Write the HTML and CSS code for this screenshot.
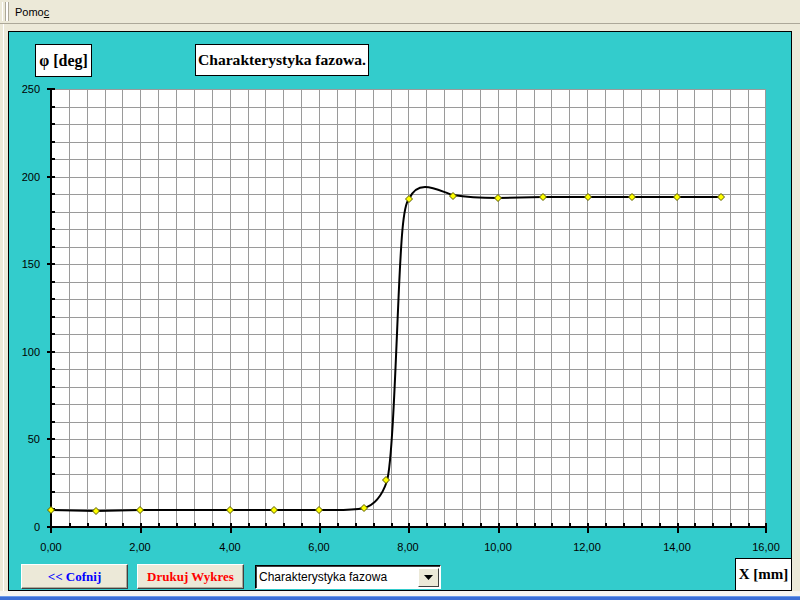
FILE: index.html
```html
<!DOCTYPE html>
<html lang="pl">
<head>
<meta charset="utf-8">
<title>Charakterystyka fazowa</title>
<link rel="stylesheet" href="styles.css">
</head>
<body>
<div class="menubar">
  <span class="grip"></span>
  <span class="menu-item">Pomo<u>c</u></span>
</div>
<div class="frame">
  <div class="panel">
    <div class="header">
      <div class="label-box unit-box">φ [deg]</div>
      <div class="label-box title-box">Charakterystyka fazowa.</div>
    </div>
    <svg class="chart" width="782" height="478" viewBox="0 0 782 478" xmlns="http://www.w3.org/2000/svg">
      <defs>
        <path id="mk" d="M0 -3.5L3.5 0L0 3.5L-3.5 0Z" fill="#ffff00" stroke="#5a5a00" stroke-width="1"/>
      </defs>
      <g transform="translate(-9,-80)">
        <rect x="51" y="89" width="715" height="438" fill="#ffffff"/>
        <path class="grid" d="M69.5 89v438M87.5 89v438M105.5 89v438M122.5 89v438M140.5 89v438M158.5 89v438M176.5 89v438M194.5 89v438M212.5 89v438M230.5 89v438M248.5 89v438M265.5 89v438M283.5 89v438M301.5 89v438M319.5 89v438M337.5 89v438M355.5 89v438M373.5 89v438M391.5 89v438M408.5 89v438M426.5 89v438M444.5 89v438M462.5 89v438M480.5 89v438M498.5 89v438M516.5 89v438M534.5 89v438M551.5 89v438M569.5 89v438M587.5 89v438M605.5 89v438M623.5 89v438M641.5 89v438M659.5 89v438M677.5 89v438M694.5 89v438M712.5 89v438M730.5 89v438M748.5 89v438M765.5 89v438M51 89.5h715M51 107.5h715M51 124.5h715M51 142.5h715M51 159.5h715M51 177.5h715M51 194.5h715M51 212.5h715M51 229.5h715M51 247.5h715M51 264.5h715M51 282.5h715M51 299.5h715M51 317.5h715M51 334.5h715M51 352.5h715M51 369.5h715M51 387.5h715M51 404.5h715M51 422.5h715M51 439.5h715M51 457.5h715M51 474.5h715M51 492.5h715M51 509.5h715"/>
        <path class="tick" d="M52 107h3M52 124h3M52 142h3M52 159h3M52 194h3M52 212h3M52 229h3M52 247h3M52 282h3M52 299h3M52 317h3M52 334h3M52 369h3M52 387h3M52 404h3M52 422h3M52 457h3M52 474h3M52 492h3M52 509h3M47 89h8M47 177h8M47 264h8M47 352h8M47 439h8M47 527h8"/>
        <path class="tick" d="M70 523v3M88 523v3M106 523v3M123 523v3M159 523v3M177 523v3M195 523v3M213 523v3M249 523v3M266 523v3M284 523v3M302 523v3M338 523v3M356 523v3M374 523v3M392 523v3M427 523v3M445 523v3M463 523v3M481 523v3M517 523v3M535 523v3M552 523v3M570 523v3M606 523v3M624 523v3M642 523v3M660 523v3M695 523v3M713 523v3M731 523v3M749 523v3M141 523v10M231 523v10M320 523v10M409 523v10M499 523v10M588 523v10M678 523v10M766 523v10"/>
        <path class="axis" d="M51 89V533M50 527H767"/>
        <path class="curve" d="M51 510L96 511L140 510L230 510L274 510L319 510C335 510 350 511 364 508C375 505 382 496 387 481C392 462 395 380 398 310C401 240 403 205 409 199C413 190 418 187 425 187C435 187 445 193 453 195C465 197 480 198 498 198L543 197L721 197"/>
        <use href="#mk" x="51" y="510"/>
        <use href="#mk" x="96" y="511"/>
        <use href="#mk" x="140" y="510"/>
        <use href="#mk" x="230" y="510"/>
        <use href="#mk" x="274" y="510"/>
        <use href="#mk" x="319" y="510"/>
        <use href="#mk" x="364" y="508"/>
        <use href="#mk" x="386" y="480"/>
        <use href="#mk" x="409" y="199"/>
        <use href="#mk" x="453" y="196"/>
        <use href="#mk" x="498" y="198"/>
        <use href="#mk" x="543" y="197"/>
        <use href="#mk" x="588" y="197"/>
        <use href="#mk" x="632" y="197"/>
        <use href="#mk" x="677" y="197"/>
        <use href="#mk" x="721" y="197"/>
        <g class="ylabels">
          <text x="40" y="93">250</text>
          <text x="40" y="181">200</text>
          <text x="40" y="268">150</text>
          <text x="40" y="356">100</text>
          <text x="40" y="443">50</text>
          <text x="40" y="531">0</text>
        </g>
        <g class="xlabels">
          <text x="51" y="551">0,00</text>
          <text x="140" y="551">2,00</text>
          <text x="230" y="551">4,00</text>
          <text x="319" y="551">6,00</text>
          <text x="408" y="551">8,00</text>
          <text x="498" y="551">10,00</text>
          <text x="587" y="551">12,00</text>
          <text x="677" y="551">14,00</text>
          <text x="766" y="551">16,00</text>
        </g>
      </g>
    </svg>
    <div class="footer">
      <button class="btn btn-back">&lt;&lt; Cofnij</button>
      <button class="btn btn-print">Drukuj Wykres</button>
      <div class="combo">
        <span class="combo-text">Charakterystyka fazowa</span>
        <span class="combo-arrow"><svg width="9" height="5" viewBox="0 0 9 5"><path d="M0 0H9L4.5 5Z" fill="#000"/></svg></span>
      </div>
      <div class="label-box xunit-box">X [mm]</div>
    </div>
  </div>
</div>
<div class="bottom-gap"></div>
<div class="taskbar"></div>
</body>
</html>
```
FILE: styles.css
```css
html, body {
  margin: 0;
  padding: 0;
}
body {
  width: 800px;
  height: 600px;
  overflow: hidden;
  background: #ECE9D8;
  font-family: "Liberation Sans", Arial, sans-serif;
  font-size: 11px;
  color: #000;
}
.menubar {
  height: 24px;
  box-sizing: border-box;
  border-bottom: 1px solid #ACA899;
  display: flex;
  align-items: center;
}
.grip {
  margin-left: 2px;
  width: 2px;
  height: 19px;
  border-left: 1px solid #ffffff;
  border-right: 1px solid #ACA899;
  box-shadow: 2px 0 0 #ffffff, 3px 0 0 #ACA899;
}
.menu-item {
  margin-left: 9px;
  font-size: 11px;
}
.menu-item u {
  text-decoration: underline;
}
.frame {
  margin-left: 3px;
  border-left: 1px solid #ffffff;
  padding: 7px 0 0 4px;
  height: 560px;
}
.panel {
  width: 784px;
  height: 560px;
  box-sizing: border-box;
  border: 1px solid #000;
  background: #33CCCC;
  display: flex;
  flex-direction: column;
}
.header {
  height: 48px;
  box-sizing: border-box;
  padding: 12px 0 0 26px;
  display: flex;
  align-items: flex-start;
}
.label-box {
  background: #fff;
  border: 1px solid #000;
  box-sizing: border-box;
  font-family: "Liberation Serif", "Times New Roman", serif;
  font-weight: bold;
  display: flex;
  align-items: center;
  justify-content: center;
}
.unit-box {
  width: 57px;
  height: 33px;
  font-size: 16px;
}
.title-box {
  margin-left: 103px;
  width: 174px;
  height: 32px;
  font-size: 15.6px;
}
.chart {
  display: block;
  flex: none;
}
.grid {
  fill: none;
  stroke: #9a9a9a;
  stroke-width: 1;
}
.tick {
  fill: none;
  stroke: #000;
  stroke-width: 2;
}
.axis {
  fill: none;
  stroke: #000;
  stroke-width: 2;
}
.curve {
  fill: none;
  stroke: #000;
  stroke-width: 2;
}
.ylabels text, .xlabels text {
  font-family: "Liberation Sans", Arial, sans-serif;
  font-size: 11px;
  fill: #000;
}
.ylabels text {
  text-anchor: end;
}
.xlabels text {
  text-anchor: middle;
}
.footer {
  height: 32px;
  display: flex;
  align-items: flex-end;
  padding-left: 12px;
}
.btn {
  width: 107px;
  height: 25px;
  margin: 0 0 1px 0;
  padding: 0;
  background: #ECE9D8;
  border: 1px solid;
  border-color: #ffffff #404040 #404040 #ffffff;
  box-shadow: inset -1px -1px 0 #ACA899;
  font-family: "Liberation Serif", "Times New Roman", serif;
  font-weight: bold;
  font-size: 13px;
}
.btn-back {
  color: #0000ff;
}
.btn-print {
  color: #ff0000;
  margin-left: 9px;
}
.combo {
  margin: 0 0 1px 11px;
  width: 186px;
  height: 24px;
  box-sizing: border-box;
  background: #fff;
  border: 1px solid;
  border-color: #000 #ffffff #ffffff #000;
  box-shadow: inset 1px 1px 0 #404040;
  display: flex;
  align-items: center;
  padding: 0 1px 0 3px;
}
.combo-text {
  flex: 1;
  font-family: "Liberation Sans", Arial, sans-serif;
  font-size: 12px;
}
.combo-arrow {
  width: 21px;
  height: 19px;
  box-sizing: border-box;
  background: #ECE9D8;
  border: 1px solid;
  border-color: #ffffff #404040 #404040 #ffffff;
  display: flex;
  align-items: center;
  justify-content: center;
}
.combo-arrow svg {
  display: block;
}
.xunit-box {
  margin-left: auto;
  width: 56px;
  height: 32px;
  border-right: none;
  border-bottom: none;
  font-size: 15px;
}
.bottom-gap {
  height: 5px;
  background: #F6F5F0;
}
.taskbar {
  height: 4px;
  background: #3B6FD6;
  border-top: 1px solid #6C9AE8;
  box-sizing: border-box;
}
```
